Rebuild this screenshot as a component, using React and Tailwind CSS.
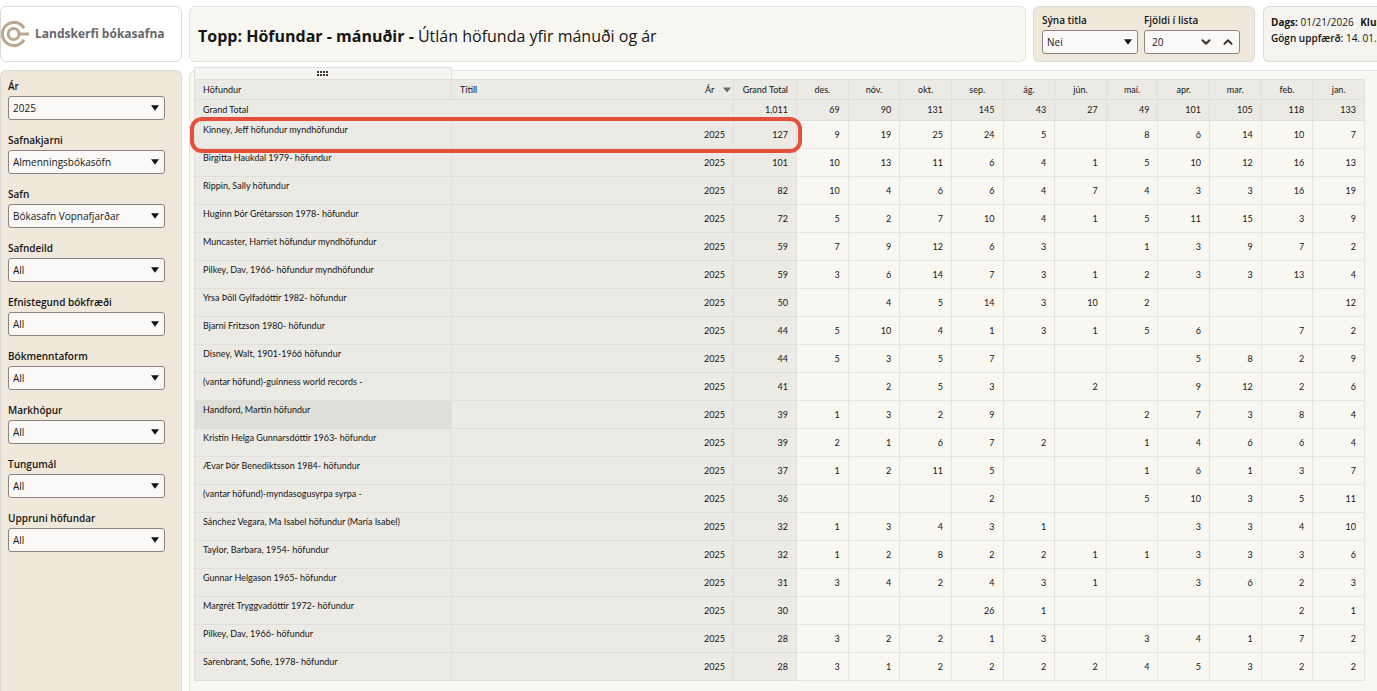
import { useState } from 'react';
import { ChevronDown, ChevronUp } from 'lucide-react';

const MONTHS = ['des.', 'nóv.', 'okt.', 'sep.', 'ág.', 'jún.', 'maí.', 'apr.', 'mar.', 'feb.', 'jan.'];

const TOTALS = [69, 90, 131, 145, 43, 27, 49, 101, 105, 118, 133];

const FILTERS = [
    { id: 'ar', label: 'Ár', value: '2025' },
    { id: 'safnakjarni', label: 'Safnakjarni', value: 'Almenningsbókasöfn' },
    { id: 'safn', label: 'Safn', value: 'Bókasafn Vopnafjarðar' },
    { id: 'safndeild', label: 'Safndeild', value: 'All' },
    { id: 'efnistegund', label: 'Efnistegund bókfræði', value: 'All' },
    { id: 'bokmenntaform', label: 'Bókmenntaform', value: 'All' },
    { id: 'markhopur', label: 'Markhópur', value: 'All' },
    { id: 'tungumal', label: 'Tungumál', value: 'All' },
    { id: 'uppruni', label: 'Uppruni höfundar', value: 'All' },
];

const ROWS = [
    { author: 'Kinney, Jeff höfundur myndhöfundur', total: 127, counts: [9, 19, 25, 24, 5, '', 8, 6, 14, 10, 7] },
    { author: 'Birgitta Haukdal 1979- höfundur', total: 101, counts: [10, 13, 11, 6, 4, 1, 5, 10, 12, 16, 13] },
    { author: 'Rippin, Sally höfundur', total: 82, counts: [10, 4, 6, 6, 4, 7, 4, 3, 3, 16, 19] },
    { author: 'Huginn Þór Grétarsson 1978- höfundur', total: 72, counts: [5, 2, 7, 10, 4, 1, 5, 11, 15, 3, 9] },
    { author: 'Muncaster, Harriet höfundur myndhöfundur', total: 59, counts: [7, 9, 12, 6, 3, '', 1, 3, 9, 7, 2] },
    { author: 'Pilkey, Dav, 1966- höfundur myndhöfundur', total: 59, counts: [3, 6, 14, 7, 3, 1, 2, 3, 3, 13, 4] },
    { author: 'Yrsa Þöll Gylfadóttir 1982- höfundur', total: 50, counts: ['', 4, 5, 14, 3, 10, 2, '', '', '', 12] },
    { author: 'Bjarni Fritzson 1980- höfundur', total: 44, counts: [5, 10, 4, 1, 3, 1, 5, 6, '', 7, 2] },
    { author: 'Disney, Walt, 1901-1966 höfundur', total: 44, counts: [5, 3, 5, 7, '', '', '', 5, 8, 2, 9] },
    { author: '(vantar höfund)-guinness world records -', total: 41, counts: ['', 2, 5, 3, '', 2, '', 9, 12, 2, 6] },
    { author: 'Handford, Martin höfundur', total: 39, counts: [1, 3, 2, 9, '', '', 2, 7, 3, 8, 4], active: true },
    { author: 'Kristín Helga Gunnarsdóttir 1963- höfundur', total: 39, counts: [2, 1, 6, 7, 2, '', 1, 4, 6, 6, 4] },
    { author: 'Ævar Þór Benediktsson 1984- höfundur', total: 37, counts: [1, 2, 11, 5, '', '', 1, 6, 1, 3, 7] },
    { author: '(vantar höfund)-myndasogusyrpa syrpa -', total: 36, counts: ['', '', '', 2, '', '', 5, 10, 3, 5, 11] },
    { author: 'Sánchez Vegara, Ma Isabel höfundur (María Isabel)', total: 32, counts: [1, 3, 4, 3, 1, '', '', 3, 3, 4, 10] },
    { author: 'Taylor, Barbara, 1954- höfundur', total: 32, counts: [1, 2, 8, 2, 2, 1, 1, 3, 3, 3, 6] },
    { author: 'Gunnar Helgason 1965- höfundur', total: 31, counts: [3, 4, 2, 4, 3, 1, '', 3, 6, 2, 3] },
    { author: 'Margrét Tryggvadóttir 1972- höfundur', total: 30, counts: ['', '', '', 26, 1, '', '', '', '', 2, 1] },
    { author: 'Pilkey, Dav, 1966- höfundur', total: 28, counts: [3, 2, 2, 1, 3, '', 3, 4, 1, 7, 2] },
    { author: 'Sarenbrant, Sofie, 1978- höfundur', total: 28, counts: [3, 1, 2, 2, 2, 2, 4, 5, 3, 2, 2] },
];

const Logo = () => (
    <svg className="w-7 h-7 shrink-0" viewBox="0 0 28 28" fill="none" stroke="#bca88c">
        <path strokeWidth="3" d="M23 8.2 A11.6 11.6 0 1 0 23 19.8" />
        <circle cx="12.6" cy="14" r="5.4" strokeWidth="3" />
        <path strokeWidth="3" d="M18 14 H28" />
    </svg>
);

const SelectField = ({ id, label, value }) => (
    <div>
        <label htmlFor={id} className="block h-[18px] text-[10px] leading-4 font-semibold text-[#161513]">{label}</label>
        <div className="relative">
            <select
                id={id}
                defaultValue={value}
                className="block w-full h-6 appearance-none rounded-[3px] border border-[#8b8580] bg-[#fbf9f8] pl-1 text-[10px] text-[#161513]"
            >
                <option>{value}</option>
            </select>
            <svg className="absolute right-1.5 top-[9px] w-2 h-1.5 pointer-events-none" viewBox="0 0 8 6">
                <path d="M0 0.3h8L4 5.8z" fill="#161513" />
            </svg>
        </div>
    </div>
);

const CountField = () => {
    const [count, setCount] = useState(20);

    return (
        <div>
            <label htmlFor="fjoldi" className="block h-[18px] text-[10px] leading-4 font-semibold text-[#161513]">Fjöldi í lista</label>
            <div className="flex items-center h-6 rounded-[3px] border border-[#8b8580] bg-[#fbf9f8] pl-[7px]">
                <input
                    id="fjoldi"
                    type="text"
                    value={count}
                    onChange={(e) => setCount(Number(e.target.value) || 0)}
                    className="min-w-0 flex-1 bg-transparent text-[10px] text-[#161513] outline-none"
                />
                <button type="button" aria-label="Fækka" onClick={() => setCount(count - 1)} className="px-1">
                    <ChevronDown size={14} strokeWidth={3.5} color="#3a3633" />
                </button>
                <button type="button" aria-label="Fjölga" onClick={() => setCount(count + 1)} className="px-1">
                    <ChevronUp size={14} strokeWidth={3.5} color="#3a3633" />
                </button>
            </div>
        </div>
    );
};

const AuthorTable = () => (
    <div className="relative">
        {/* Drag handle above the first column */}
        <div className="absolute left-0 -top-3 w-[258px] h-3 flex items-center justify-center border border-b-0 border-[#e0dfda] bg-[#f5f4f2]">
            <svg className="w-3 h-1.5" viewBox="0 0 12 6" fill="#3a3633">
                {[0, 3, 6, 9].map((x) => (
                    <g key={x}>
                        <rect x={x} y="0" width="2" height="2" />
                        <rect x={x} y="3" width="2" height="2" />
                    </g>
                ))}
            </svg>
        </div>

        <table className="w-full table-fixed border-separate border-spacing-0 border-l border-[#e0dfda] font-['Lato','Noto_Sans',sans-serif] text-[9px] leading-3 text-[#161513]">
            <colgroup>
                <col className="w-[257px]" />
                <col className="w-[245px]" />
                <col className="w-[37px]" />
                <col className="w-[63px]" />
                {MONTHS.map((m) => <col key={m} />)}
            </colgroup>
            <thead>
                <tr className="h-[21px] bg-[#ebeae5]">
                    <th className="border-t border-r border-b border-[#e0dfda] pl-2 text-left font-normal">Höfundur</th>
                    <th className="border-t border-b border-[#e0dfda] pl-2 text-left font-normal">Titill</th>
                    <th className="border-t border-r border-b border-[#e0dfda] pl-2 font-normal">
                        <span className="flex items-center justify-between pr-0.5">
                            Ár
                            <svg className="w-2 h-1.5" viewBox="0 0 8 6"><path d="M0 0.5h8L4 5.5z" fill="#6b6966" /></svg>
                        </span>
                    </th>
                    <th className="border-t border-r border-b border-[#e0dfda] pr-2 text-right font-normal whitespace-nowrap">Grand Total</th>
                    {MONTHS.map((m) => (
                        <th key={m} className="border-t border-r border-b border-[#e0dfda] text-center font-normal">{m}</th>
                    ))}
                </tr>
            </thead>
            <tbody>
                <tr className="h-[21px] bg-[#ebeae5]">
                    <th className="border-b border-[#e0dfda] pl-2 text-left font-normal">Grand Total</th>
                    <td className="border-b border-[#e0dfda]"></td>
                    <td className="border-r border-b border-[#e0dfda]"></td>
                    <td className="border-r border-b border-[#e0dfda] pr-2 text-right">1,011</td>
                    {TOTALS.map((n, i) => (
                        <td key={MONTHS[i]} className="border-r border-b border-[#e0dfda] pr-2 text-right">{n}</td>
                    ))}
                </tr>
                {ROWS.map((row) => (
                    <tr key={row.author} className="h-7">
                        <th className={`border-r border-b border-[#e0dfda] pl-2 pt-[3px] text-left align-top font-normal whitespace-nowrap ${row.active ? 'bg-[#dfded9]' : 'bg-[#ebeae5]'}`}>
                            {row.author}
                        </th>
                        <td className="border-b border-[#e0dfda] bg-[#ebeae5]"></td>
                        <td className="border-r border-b border-[#e0dfda] bg-[#ebeae5] pr-2 text-right">2025</td>
                        <td className="border-r border-b border-[#e0dfda] bg-[#ebeae5] pr-2 text-right">{row.total}</td>
                        {row.counts.map((n, i) => (
                            <td key={MONTHS[i]} className="border-r border-b border-[#e6e5e0] pr-2 text-right">{n}</td>
                        ))}
                    </tr>
                ))}
            </tbody>
        </table>

        {/* Marker around the top author */}
        <div className="absolute -left-1 top-[38px] w-[612px] h-9 rounded-xl border-4 border-[#e5503c] pointer-events-none"></div>
    </div>
);

const App = () => {
    return (
        <div className="flex flex-col gap-2 min-h-screen overflow-hidden bg-white pt-1.5 font-['Open_Sans','Noto_Sans',sans-serif]">
            <header className="flex h-14">
                <div className="flex items-center gap-1.5 w-[182px] shrink-0 rounded-md border border-[#dcdad6] bg-white">
                    <Logo />
                    <span className="text-[12px] font-bold text-[#66666b] whitespace-nowrap">Landskerfi bókasafna</span>
                </div>
                <div className="flex flex-1 items-center ml-[7px] rounded-md border border-[#e4e2dc] bg-[#f8f7f2] pl-2 pt-1">
                    <h1 className="text-[16px] text-[#161513] whitespace-nowrap">
                        <b>Topp: Höfundar - mánuðir - </b>Útlán höfunda yfir mánuði og ár
                    </h1>
                </div>
                <div className="grid grid-cols-2 gap-1.5 w-[222px] shrink-0 ml-[7px] rounded-md border border-[#dcdad6] bg-[#f0e8da] pl-2 pr-3.5 pt-[5px]">
                    <SelectField id="titlar" label="Sýna titla" value="Nei" />
                    <CountField />
                </div>
                <div className="w-[114px] shrink-0 ml-2 overflow-hidden rounded-l-md border border-r-0 border-[#dcdad6] bg-[#f5f4f0] pl-[7px] pt-[7px] text-[10px] leading-4 text-[#161513] whitespace-nowrap">
                    <p><b>Dags:</b> 01/21/2026 <b className="ml-1">Klu</b></p>
                    <p><b className="font-semibold">Gögn uppfærð:</b> 14. 01. 2</p>
                </div>
            </header>

            <div className="flex flex-1 gap-[7px]">
                <aside className="flex flex-col gap-3 w-[182px] shrink-0 rounded-t-md border border-b-0 border-[#dcdad6] bg-[#f0e8da] pl-[7px] pr-4 pt-[7px]">
                    {FILTERS.map((f) => <SelectField key={f.id} {...f} />)}
                </aside>
                <main className="min-w-0 flex-1 rounded-tl-md border-t border-l border-[#e4e2dc] bg-[#f8f7f2] pl-1 pr-3 pt-2 pb-2">
                    <AuthorTable />
                </main>
            </div>
        </div>
    );
};

export default App;
